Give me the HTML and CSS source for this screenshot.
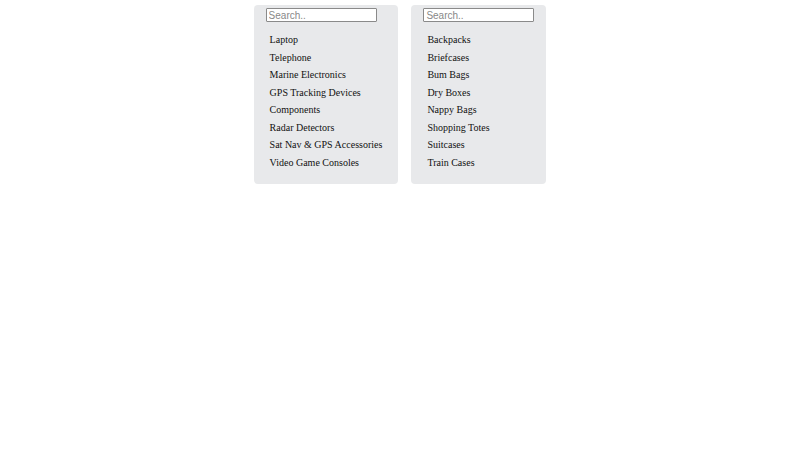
FILE: index.html
```html
<!DOCTYPE html>
<html lang="en">
<head>
  <meta charset="UTF-8">
  <meta name="viewport" content="width=device-width, initial-scale=1.0">
  <title>Categories</title>
  <link rel="stylesheet" href="styles.css">
</head>
<body>
  <div class="container">
    <div class="panel">
      <input type="text" class="search" placeholder="Search..">
      <ul class="list">
        <li>Laptop</li>
        <li>Telephone</li>
        <li>Marine Electronics</li>
        <li>GPS Tracking Devices</li>
        <li>Components</li>
        <li>Radar Detectors</li>
        <li>Sat Nav &amp; GPS Accessories</li>
        <li>Video Game Consoles</li>
      </ul>
    </div>
    <div class="panel">
      <input type="text" class="search" placeholder="Search..">
      <ul class="list">
        <li>Backpacks</li>
        <li>Briefcases</li>
        <li>Bum Bags</li>
        <li>Dry Boxes</li>
        <li>Nappy Bags</li>
        <li>Shopping Totes</li>
        <li>Suitcases</li>
        <li>Train Cases</li>
      </ul>
    </div>
  </div>
</body>
</html>
```

FILE: styles.css
```css
html, body {
  margin: 0;
  padding: 0;
  background-color: #fff;
  font-family: "Liberation Serif", serif;
  color: #111;
}

.container {
  display: flex;
  justify-content: center;
  align-items: flex-start;
  gap: 13px;
  padding-top: 5px;
}

.panel {
  background-color: #e8e9eb;
  border-radius: 4px;
  padding: 3px 12px 13px 12px;
}

.search {
  display: block;
  box-sizing: border-box;
  width: 111px;
  height: 14px;
  margin: 0;
  padding: 0 2px;
  border: 1px solid #8a8a8a;
  border-radius: 1px;
  font-family: "Liberation Sans", sans-serif;
  font-size: 10px;
  background-color: #fff;
}

.search::placeholder {
  color: #888;
}

.list {
  list-style: none;
  margin: 9px 0 0 0;
  padding: 0 4px;
  font-size: 10px;
  line-height: 17.5px;
}
```
